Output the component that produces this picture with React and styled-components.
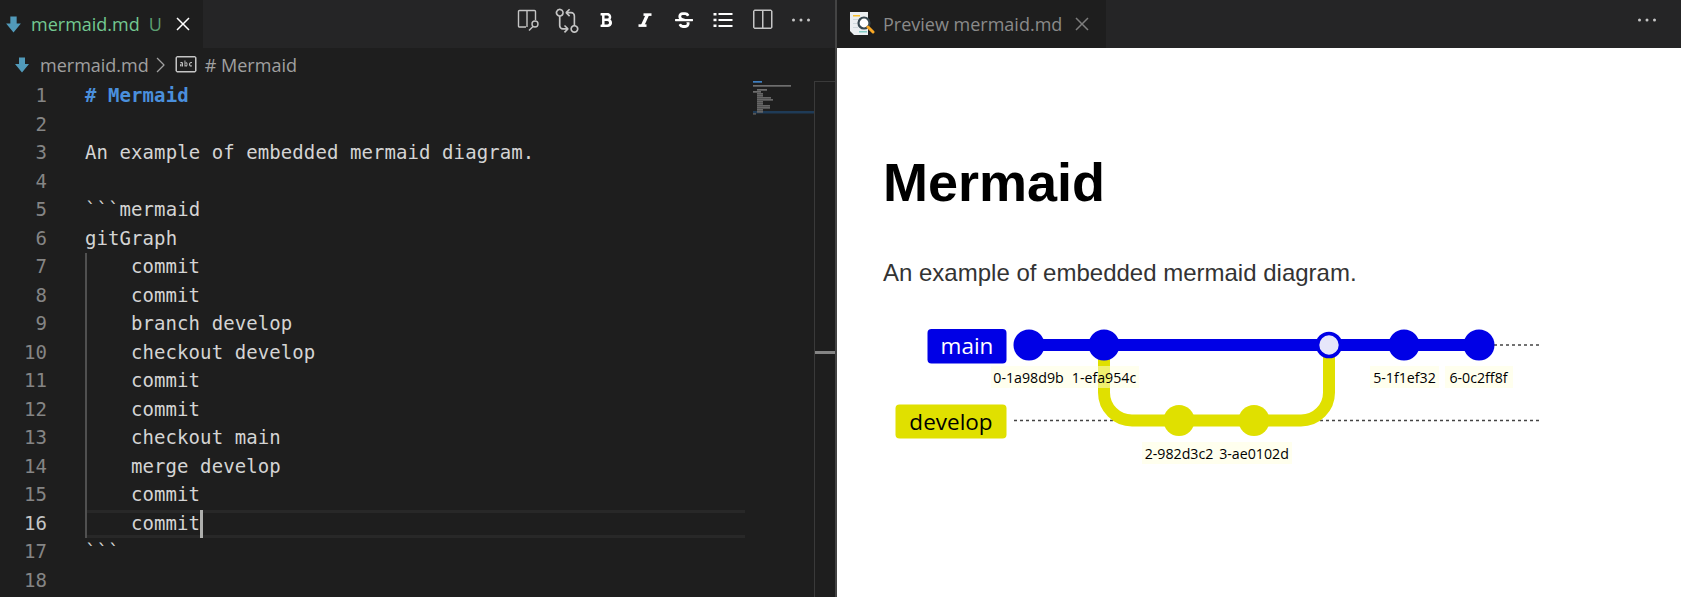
import styled, { createGlobalStyle } from "styled-components";
import {
  VscClose,
  VscChevronRight,
  VscSymbolString,
  VscGitCompare,
  VscEllipsis,
  VscSplitHorizontal,
} from "react-icons/vsc";
import { FaBold, FaStrikethrough } from "react-icons/fa";

const GlobalStyle = createGlobalStyle`
  html, body {
    margin: 0;
    padding: 0;
    background: #1e1e1e;
    overflow: hidden;
  }
`;

const codeTop = [
  { n: 1, text: "# Mermaid", heading: true },
  { n: 2, text: "" },
  { n: 3, text: "An example of embedded mermaid diagram." },
  { n: 4, text: "" },
  { n: 5, text: "```mermaid" },
  { n: 6, text: "gitGraph" },
];

const codeIndented = [
  "commit",
  "commit",
  "branch develop",
  "checkout develop",
  "commit",
  "commit",
  "checkout main",
  "merge develop",
  "commit",
  "commit",
];

const codeBottom = [
  { n: 17, text: "```" },
  { n: 18, text: "" },
];

const numbers = Array.from({ length: 18 }, (_, i) => i + 1);

function MdIcon({ size = 18 }) {
  return (
    <svg width={size} height={size} viewBox="0 0 18 18">
      <path d="M6 1.5h6v6.5h4L9 16.5 2 8h4z" fill="#519aba" />
    </svg>
  );
}

function PanelSearchIcon() {
  return (
    <svg width="24" height="24" viewBox="0 0 24 24" fill="none" stroke="#c5c5c5" strokeWidth="1.4">
      <path d="M10 19H3.5a1 1 0 0 1-1-1V3.5a1 1 0 0 1 1-1h15a1 1 0 0 1 1 1V12" />
      <path d="M11 2.5V19" />
      <circle cx="19" cy="16" r="3" />
      <path d="M17 18.5l-4 4" />
    </svg>
  );
}

function ItalicIcon() {
  return (
    <svg width="16" height="16" viewBox="0 0 16 16" fill="none" stroke="#fff" strokeWidth="2.6">
      <path d="M6.5 2.6H14.5" />
      <path d="M1.5 13.6H9.5" />
      <path d="M10.5 2.6L5.5 13.6" strokeWidth="3.4" />
    </svg>
  );
}

function BulletListIcon() {
  return (
    <svg width="20" height="16" viewBox="0 0 20 16" fill="#fff">
      <rect x="0.5" y="1" width="3" height="2.5" />
      <rect x="0.5" y="6.7" width="3" height="2.5" />
      <rect x="0.5" y="12.5" width="3" height="2.5" />
      <rect x="5.5" y="1" width="14" height="2" />
      <rect x="5.5" y="7" width="14" height="2" />
      <rect x="5.5" y="13" width="14" height="2" />
    </svg>
  );
}

function PreviewFileIcon() {
  return (
    <svg width="26" height="26" viewBox="0 0 26 26">
      <path d="M1 1h18v23H5l-4-4z" fill="#eceff1" />
      <path d="M4 4h7v1.5H4z" fill="#fbc02d" />
      <path d="M4 8h5v1H4zM4 12h4v1H4zM4 16h5v1H4z" fill="#cfd8dc" />
      <path d="M10 20h8v1.5h-8z" fill="#80cbc4" />
      <circle cx="15" cy="12" r="5.5" fill="#fff" stroke="#37474f" strokeWidth="2.2" />
      <path d="M19 16l5 5" stroke="#f9a825" strokeWidth="3" strokeLinecap="round" />
    </svg>
  );
}

function Minimap() {
  const rows = [
    [753, 81, 9, "#3f7fc0"],
    [753, 85, 38, "#6e6e6e"],
    [757, 89, 10, "#6e6e6e"],
    [753, 91, 8, "#6e6e6e"],
    [757, 93, 6, "#666666"],
    [757, 95, 6, "#666666"],
    [757, 97, 14, "#666666"],
    [757, 99, 16, "#666666"],
    [757, 101, 6, "#666666"],
    [757, 103, 6, "#666666"],
    [757, 105, 13, "#666666"],
    [757, 107, 13, "#666666"],
    [757, 109, 6, "#666666"],
    [757, 111, 6, "#666666"],
    [753, 113, 3, "#555555"],
  ];
  return (
    <MinimapSvg width="62" height="36" viewBox="753 80 62 36">
      <rect x="753" y="111" width="61" height="2.5" fill="#1f3b57" />
      {rows.map(([x, y, w, c]) => (
        <rect key={y} x={x} y={y} width={w} height="1.7" fill={c} />
      ))}
    </MinimapSvg>
  );
}

function GitGraph() {
  const main = [1029, 1104, 1404, 1479];
  const dev = [1179, 1254];
  const labels = [
    ["0-1a98d9b", 991, 75, 1028.5],
    ["1-efa954c", 1066, 73, 1104],
    ["2-982d3c2", 1142, 75, 1179],
    ["3-ae0102d", 1217, 75, 1254],
    ["5-1f1ef32", 1370, 69, 1404.5],
    ["6-0c2ff8f", 1445, 68, 1478.5],
  ];
  return (
    <DiagramSvg width="680" height="150" viewBox="880 320 680 150">
      <line x1="1014" y1="345" x2="1539" y2="345" stroke="#444" strokeWidth="1.5" strokeDasharray="3 3" />
      <line x1="1014" y1="420.5" x2="1539" y2="420.5" stroke="#444" strokeWidth="1.5" strokeDasharray="3 3" />
      <rect x="927.5" y="329" width="79" height="34.5" rx="4" fill="#0000e6" />
      <rect x="895.5" y="404.5" width="111" height="34" rx="4" fill="#e0e000" />
      <GraphLabel x="967" y="354" fill="#fff" fontSize="22.5">main</GraphLabel>
      <GraphLabel x="951" y="429.5" fill="#000" fontSize="22.5">develop</GraphLabel>
      <path
        d="M1104 345V392.5a28 28 0 0 0 28 28H1301a28 28 0 0 0 28-28V345"
        fill="none"
        stroke="#e0e000"
        strokeWidth="12"
      />
      <line x1="1029" y1="345" x2="1479" y2="345" stroke="#0000e6" strokeWidth="12" />
      {main.map((x) => (
        <circle key={x} cx={x} cy="345" r="15.5" fill="#0000e6" />
      ))}
      {dev.map((x) => (
        <circle key={x} cx={x} cy="420.5" r="15.5" fill="#e0e000" />
      ))}
      <circle cx="1329" cy="345" r="11.5" fill="#e6e6fa" stroke="#0000e6" strokeWidth="3.6" />
      {labels.map(([t, x, w, cx]) => {
        const y = t[0] === "2" || t[0] === "3" ? 442 : 366;
        return (
          <g key={t}>
            <rect x={x} y={y} width={w} height="22" fill="#ffffde" fillOpacity="0.5" />
            <GraphLabel x={cx} y={y + 16.5} fill="#000" fontSize="14.2">
              {t}
            </GraphLabel>
          </g>
        );
      })}
    </DiagramSvg>
  );
}

export default function App() {
  return (
    <Page>
      <GlobalStyle />
      <EditorPane>
        <TabBar>
          <Tab $width={203} $pad={4}>
            <MdIcon size={19} />
            <TabName $color="#73c991">mermaid.md</TabName>
            <TabBadge>U</TabBadge>
            <CloseWrap $color="#ffffff">
              <VscClose size={24} />
            </CloseWrap>
          </Tab>
          <Toolbar>
            <ToolButton><PanelSearchIcon /></ToolButton>
            <ToolButton><VscGitCompare size={26} /></ToolButton>
            <ToolButton $white><FaBold size={16} /></ToolButton>
            <ToolButton $white><ItalicIcon /></ToolButton>
            <ToolButton $white><FaStrikethrough size={18} /></ToolButton>
            <ToolButton $white><BulletListIcon /></ToolButton>
            <ToolButton><VscSplitHorizontal size={24} /></ToolButton>
            <ToolButton><VscEllipsis size={24} /></ToolButton>
          </Toolbar>
        </TabBar>
        <Breadcrumbs>
          <MdIcon size={18} />
          <CrumbText>mermaid.md</CrumbText>
          <CrumbChevron><VscChevronRight size={24} /></CrumbChevron>
          <CrumbSymbol><VscSymbolString size={24} /></CrumbSymbol>
          <CrumbText $tight># Mermaid</CrumbText>
        </Breadcrumbs>
        <EditorBody>
          <Gutter>
            {numbers.map((n) => (
              <LineNumber key={n} $current={n === 16}>{n}</LineNumber>
            ))}
          </Gutter>
          <Code>
            {codeTop.map((l) => (
              <Line key={l.n} $heading={l.heading}>{l.text}</Line>
            ))}
            <IndentBlock>
              {codeIndented.map((text, i) => (
                <Line key={i} $current={i === codeIndented.length - 1} $indent>
                  {text}
                  {i === codeIndented.length - 1 && <Cursor />}
                </Line>
              ))}
            </IndentBlock>
            {codeBottom.map((l) => (
              <Line key={l.n}>{l.text}</Line>
            ))}
          </Code>
          <Minimap />
          <OverviewRuler>
            <RulerMark />
          </OverviewRuler>
        </EditorBody>
      </EditorPane>
      <Sash />
      <PreviewPane>
        <TabBar>
          <Tab $width={269} $pad={12}>
            <PreviewFileIcon />
            <TabName $color="#8a8a8a" $gap={8}>Preview mermaid.md</TabName>
            <CloseWrap $color="#7d7d7d" $gap={8}>
              <VscClose size={24} />
            </CloseWrap>
          </Tab>
          <Toolbar>
            <ToolButton><VscEllipsis size={24} /></ToolButton>
          </Toolbar>
        </TabBar>
        <PreviewBody>
          <Title>Mermaid</Title>
          <Paragraph>An example of embedded mermaid diagram.</Paragraph>
          <GitGraph />
        </PreviewBody>
      </PreviewPane>
    </Page>
  );
}

const Page = styled.div`
  display: flex;
  width: 1681px;
  height: 597px;
  overflow: hidden;
  background: #1e1e1e;
`;

const EditorPane = styled.div`
  width: 835px;
  flex: none;
  display: flex;
  flex-direction: column;
`;

const Sash = styled.div`
  width: 2px;
  flex: none;
  background: #444444;
`;

const PreviewPane = styled.div`
  flex: 1;
  display: flex;
  flex-direction: column;
  min-width: 0;
`;

const TabBar = styled.div`
  height: 48px;
  flex: none;
  display: flex;
  align-items: stretch;
  justify-content: space-between;
  background: #252526;
`;

const Tab = styled.div`
  width: ${(p) => p.$width}px;
  box-sizing: border-box;
  padding-left: ${(p) => p.$pad}px;
  display: flex;
  align-items: center;
  background: #1e1e1e;
`;

const TabName = styled.span`
  margin-left: ${(p) => p.$gap || 8}px;
  font-family: "Open Sans", sans-serif;
  font-size: 18px;
  white-space: nowrap;
  color: ${(p) => p.$color};
`;

const TabBadge = styled.span`
  margin-left: 9px;
  font-family: "Open Sans", sans-serif;
  font-size: 18px;
  color: #5b9e70;
`;

const CloseWrap = styled.span`
  margin-left: ${(p) => p.$gap ?? 9}px;
  display: flex;
  color: ${(p) => p.$color};
`;

const Toolbar = styled.div`
  display: flex;
  align-items: center;
  padding-right: 15px;
  padding-bottom: 8px;
`;

const ToolButton = styled.div`
  width: 39px;
  display: flex;
  justify-content: center;
  align-items: center;
  color: ${(p) => (p.$white ? "#ffffff" : "#c5c5c5")};
`;

const Breadcrumbs = styled.div`
  height: 34px;
  flex: none;
  box-sizing: border-box;
  padding-left: 13px;
  display: flex;
  align-items: center;
  color: #a0a0a0;
`;

const CrumbText = styled.span`
  margin-left: ${(p) => (p.$tight ? "7px" : "9px")};
  font-family: "Open Sans", sans-serif;
  font-size: 18px;
  color: #a0a0a0;
`;

const CrumbChevron = styled.span`
  display: flex;
  margin-left: -1px;
`;

const CrumbSymbol = styled.span`
  display: flex;
  margin-left: 2px;
  color: #c5c5c5;
`;

const EditorBody = styled.div`
  position: relative;
  flex: 1;
  display: flex;
  font-family: "DejaVu Sans Mono", monospace;
  font-size: 19px;
  line-height: 27px;
`;

const Gutter = styled.div`
  width: 85px;
  flex: none;
  box-sizing: border-box;
  padding-right: 38px;
  text-align: right;
`;

const LineNumber = styled.div`
  height: 28.5px;
  color: ${(p) => (p.$current ? "#c6c6c6" : "#858585")};
`;

const Code = styled.div`
  width: 660px;
  flex: none;
`;

const IndentBlock = styled.div`
  box-shadow: inset 2px 0 0 #505050;
`;

const Line = styled.div`
  position: relative;
  height: 28.5px;
  box-sizing: border-box;
  white-space: pre;
  letter-spacing: 0.08px;
  color: ${(p) => (p.$heading ? "#4a8fdc" : "#d4d4d4")};
  font-weight: ${(p) => (p.$heading ? 700 : 400)};
  padding-left: ${(p) => (p.$indent ? "46px" : "0")};
  ${(p) =>
    p.$current &&
    `
    box-shadow: inset 2px 0 0 #505050, inset 0 3px 0 #282828, inset 0 -3px 0 #282828;
  `}
`;

const Cursor = styled.span`
  display: inline-block;
  width: 3px;
  height: 28px;
  vertical-align: top;
  background: #aeafad;
`;

const MinimapSvg = styled.svg`
  position: absolute;
  left: 753px;
  top: -2px;
`;

const OverviewRuler = styled.div`
  position: absolute;
  top: -1px;
  right: 0;
  bottom: 0;
  left: 814px;
  border-top: 1px solid #3a3a3a;
  border-left: 1px solid #3a3a3a;
`;

const RulerMark = styled.div`
  position: absolute;
  top: 269px;
  left: 0;
  right: 0;
  height: 3px;
  background: #858585;
`;

const PreviewBody = styled.div`
  flex: 1;
  background: #ffffff;
  padding: 0 0 0 46px;
  font-family: "Liberation Sans", Arial, sans-serif;
`;

const Title = styled.h1`
  margin: 99px 0 0;
  font-size: 54px;
  line-height: 70px;
  font-weight: 700;
  color: #000000;
`;

const Paragraph = styled.p`
  margin: 40px 0 0;
  font-size: 24px;
  line-height: 32px;
  color: #333333;
`;

const DiagramSvg = styled.svg`
  display: block;
  margin: 31px 0 0 -3px;
`;

const GraphLabel = styled.text`
  font-family: "Open Sans", sans-serif;
  text-anchor: middle;
`;
